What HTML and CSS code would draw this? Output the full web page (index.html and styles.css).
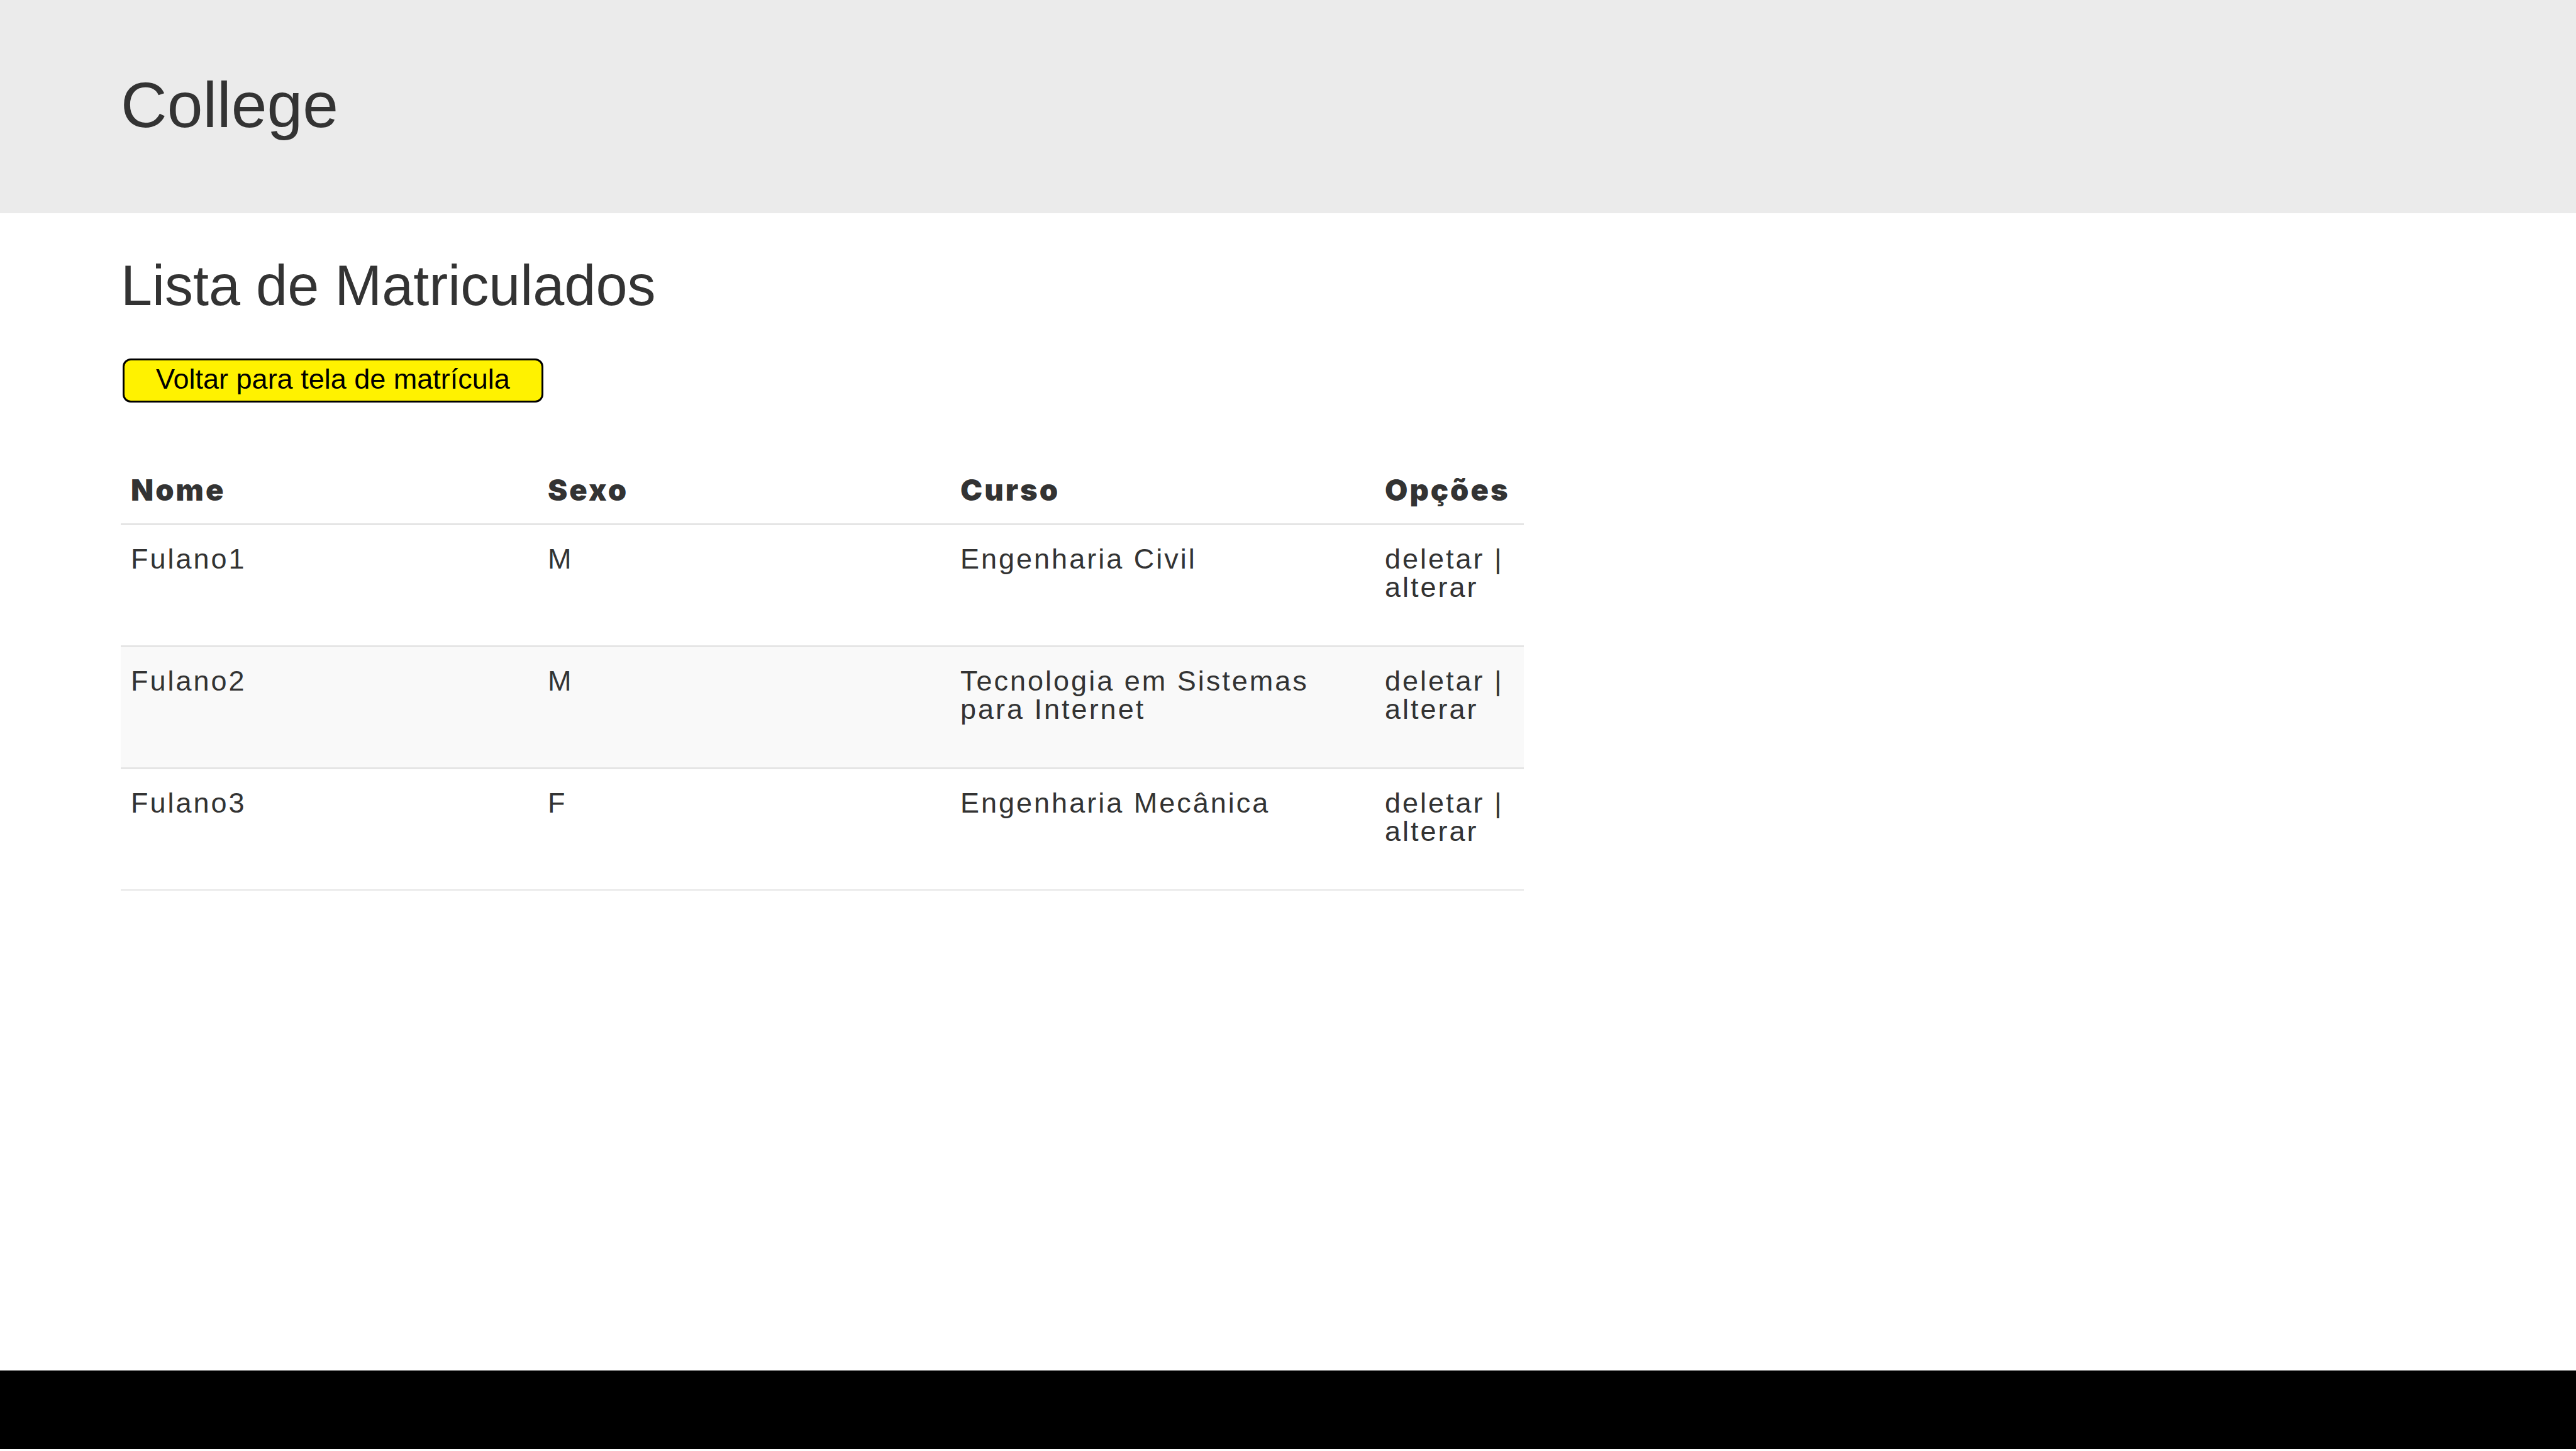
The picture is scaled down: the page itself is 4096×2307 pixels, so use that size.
FILE: index.html
```html
<!DOCTYPE html>
<html lang="pt-BR">
<head>
  <meta charset="utf-8">
  <title>College</title>
  <link rel="stylesheet" href="styles.css">
</head>
<body>
  <header class="site-header">
    <h1 class="site-title">College</h1>
  </header>
  <main class="content">
    <h2 class="page-title">Lista de Matriculados</h2>
    <button class="back-button" type="button">Voltar para tela de matrícula</button>
    <table class="students">
      <colgroup>
        <col class="col-name">
        <col class="col-sex">
        <col class="col-course">
        <col class="col-options">
      </colgroup>
      <thead>
        <tr>
          <th scope="col">Nome</th>
          <th scope="col">Sexo</th>
          <th scope="col">Curso</th>
          <th scope="col">Opções</th>
        </tr>
      </thead>
      <tbody>
        <tr>
          <td>Fulano1</td>
          <td>M</td>
          <td>Engenharia Civil</td>
          <td><a href="#deletar-1">deletar</a> | <a href="#alterar-1">alterar</a></td>
        </tr>
        <tr>
          <td>Fulano2</td>
          <td>M</td>
          <td>Tecnologia em Sistemas para Internet</td>
          <td><a href="#deletar-2">deletar</a> | <a href="#alterar-2">alterar</a></td>
        </tr>
        <tr>
          <td>Fulano3</td>
          <td>F</td>
          <td>Engenharia Mecânica</td>
          <td><a href="#deletar-3">deletar</a> | <a href="#alterar-3">alterar</a></td>
        </tr>
      </tbody>
    </table>
  </main>
  <footer class="site-footer"></footer>
</body>
</html>
```

FILE: styles.css
```css
* {
  box-sizing: border-box;
}

body {
  display: flex;
  flex-direction: column;
  min-height: 100vh;
  margin: 0;
  background: #fff;
  color: #333;
  font-family: "Liberation Sans", Arial, sans-serif;
  font-size: 45px;
  line-height: 45px;
}

.site-header {
  padding: 116px 192px 121px;
  background: #ebebeb;
}

.site-title {
  margin: 0;
  font-size: 102px;
  font-weight: 400;
  line-height: 102px;
}

.content {
  flex: 1;
  padding: 70px 192px;
}

.page-title {
  margin: 0 0 71px;
  font-size: 90px;
  font-weight: 400;
  line-height: 90px;
}

.back-button {
  display: block;
  margin: 0 3px 85px;
  padding: 7px 50px 12px;
  border: 3px solid #000;
  border-radius: 13px;
  background: #fff200;
  color: #000;
  font: inherit;
}

.students {
  width: 100%;
  max-width: 2231px;
  border-spacing: 0;
  table-layout: fixed;
  letter-spacing: 3px;
}

.col-name {
  width: 663px;
}

.col-sex {
  width: 656px;
}

.col-course {
  width: 675px;
}

.students th,
.students td {
  border-bottom: 3px solid #e5e5e5;
  text-align: left;
  vertical-align: top;
}

.students th {
  padding: 31px 16px;
  font-family: "Arial Black", Inter, sans-serif;
  font-size: 47px;
  font-weight: 900;
}

.students td {
  padding: 31px 16px 70px;
}

.students tbody tr:nth-child(even) {
  background: #f9f9f9;
}

.students tbody tr:last-child td {
  border-bottom-width: 2px;
}

.students a {
  color: inherit;
  text-decoration: none;
}

.site-footer {
  height: 128px;
  border-bottom: 3px solid #fff;
  background: #000;
}
```
